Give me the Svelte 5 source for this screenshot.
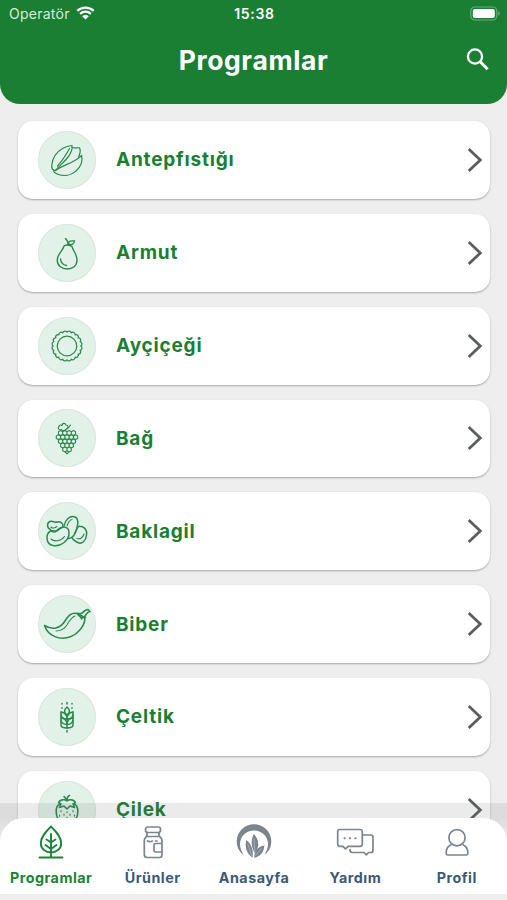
<script>
    // scalloped outline of the sunflower head
    function petals(cx, cy, r, count) {
        let d = '';
        for (let i = 0; i <= count; i++) {
            const a = (i / count) * Math.PI * 2 - Math.PI / 2;
            const x = (cx + r * Math.cos(a)).toFixed(2);
            const y = (cy + r * Math.sin(a)).toFixed(2);
            d += i === 0 ? `M${x} ${y}` : `A2.3 2.3 0 0 1 ${x} ${y}`;
        }
        return d;
    }

    function berry(x, y) {
        return `M${x} ${y - 2.4}l2.1 1.2v2.4l-2.1 1.2l-2.1 -1.2v-2.4z`;
    }

    function bunch() {
        const rows = [[24, 4], [28.2, 5], [32.4, 4], [36.5, 3], [40.5, 2]];
        return rows.map(([y, n]) => {
            let d = '';
            for (let i = 0; i < n; i++) {
                d += berry(29 + (i - (n - 1) / 2) * 4.3, y);
            }
            return d;
        }).join('') + 'M26.9 42.7l2.1 2.2l2.1 -2.2';
    }

    const programs = [
        {
            name: 'Antepfıstığı',
            width: 1.2,
            icon: [
                'M17.5 39.500C14.500 39.500 13.500 37.500 13.800 34C14.500 27 18.500 21 24.500 17.500C28 15.500 31 14.800 34 14.500C34.800 20 32 24 28.500 28C24.500 32.500 21 35.500 17.5 39.500Z',
                'M34 16.500C36.500 17.600 39 16.400 41.500 16.800C42.800 19.500 42 23 40.500 26.200',
                'M31.500 17.500C28.500 23 25 29 19.500 35',
                'M17.5 39.500C24 34 37 32 43.600 24.300C44.800 30 42.500 36 38 40C33 44.500 26 45.500 20.500 43.500C17.500 42.500 15.500 41 15.500 39'
            ]
        },
        {
            name: 'Armut',
            width: 1.4,
            icon: [
                'M26 22C28 20.5 32 20.5 34 22.5C35 27 39 30 39 36C39 42 34.5 45 29.2 45C23.5 45 19.2 41.5 19.2 36C19.2 30 25 27 26 22Z',
                'M30.3 21.5C30.5 18 29 16 27.5 14.5',
                'M30.5 20C30 17 33 16.5 36.5 17C36 20 33.5 21.5 30.5 20',
                'M22.5 35C23 39 25 41 28.5 41.5'
            ]
        },
        {
            name: 'Ayçiçeği',
            width: 1.25,
            icon: [
                petals(29, 29, 13.800, 20),
                'M19.2 29a9.8 9.8 0 1 0 19.6 0a9.8 9.8 0 1 0 -19.6 0'
            ]
        },
        {
            name: 'Bağ',
            width: 1.1,
            icon: [
                bunch(),
                'M28 21C26 22 24.5 22 23.5 20.5C20.5 21.5 19.5 19 21 17.5C21.5 15.5 23.5 16 24 16.5C24 13.5 27.5 14 28 16C30.5 16 30.5 19 29 20',
                'M27 21C29 20 31 19 32.500 16'
            ]
        },
        {
            name: 'Baklagil',
            width: 1.5,
            icon: [
                'M12 27C9 26 8.500 21 12 19.500C15 18.500 16.500 21 19 20C22 19 25.500 21 25 25C21 26 19 28 17 30C14 30 12.500 29 12 27Z',
                'M12.500 29C7.500 32 7.500 42 15 43.500C22 45 31.500 39 31 30.500C31 25 25 23.500 21.500 27C18 31 16 28 12.500 29Z',
                'M26 24C27 18 32 13 37 15C41.500 17 40 25 37 31C35.500 35 33.500 36.500 30 36.500',
                'M37 31C39 29 38 24 42 24.300C47 24.500 49.500 29 48.500 33C48 39 43.500 42.500 40 40.500C37 39 35 39 34 35.500'
            ],
            fine: ['M13 37C16 40 23 39.500 26.500 34.500M29 24C30 21 31.500 18 34 17.500M39 36.500C42 37.500 45 35.500 46 32M13 25C14.500 26.500 17 26 19 24.500']
        },
        {
            name: 'Biber',
            width: 1.6,
            icon: [
                'M6.500 30.500C14 35 22 34 27 26C30 21 33 17 39.500 18.500L46.500 22.500C48 29 41 38 33 41.500C22 46 10 41 6.500 30.500Z',
                'M39.500 18.500C40 22 43 20 43.500 24C44.500 21.500 46.500 22 47.500 22.500',
                'M43 18.500C46 18 45 15 50 14.500L52 16.500C48.500 17 49 19 46.500 21.500M39.500 18.500L43 18.500'
            ],
            fine: ['M18 36C23 36 27 33 29 30C31.500 25.500 33 22.500 37 21']
        },
        {
            name: 'Çeltik',
            width: 1.5,
            icon: [
                'M29 19C25.500 22 26 25 29 27C32 25 32.500 22 29 19ZM29 27V40',
                'M23 24V37C23 39.500 25 40 29 40C33 40 35 39.500 35 37V24',
                'M23 24C27 24.500 29 27 29 31C25 31 23 29 23 26.500M35 24C31 24.500 29 27 29 31C33 31 35 29 35 26.500',
                'M23 30C27 30.500 29 33 29 36.500C25 36.500 23 34 23 32M35 30C31 30.500 29 33 29 36.500C33 36.500 35 34 35 32',
                'M29 14.500V16M29 42.500V44M24 15.500V16M34 15.500V16M24 19.700V20.200M34 19.700V20.200'
            ]
        },
        {
            name: 'Çilek',
            width: 1.6,
            icon: [
                'M22 23C17 25 17.500 33 20 38C22 43 26 46 29 46C32 46 36 43 38 38C40.500 33 41 25 36 23',
                'M29 20C26 17.500 22 19 20.500 21.500L23 23L21.500 26.500L26 25L29 28L32 25L36.500 26.500L35 23L37.500 21.500C36 19 32 17.500 29 20ZM29 19.500C29 17 30 15 31.500 14.500M28.500 18.500L26 15.500'
            ],
            fine: ['M23 29.500v1.200M29 30.500v1.200M35 29.500v1.200M26 33v1.200M32 33v1.200M21.500 34v1.200M36.500 34v1.200M29 36v1.200']
        }
    ];

    const tabs = [
        { id: 'programs', label: 'Programlar' },
        { id: 'products', label: 'Ürünler' },
        { id: 'home', label: 'Anasayfa' },
        { id: 'help', label: 'Yardım' },
        { id: 'profile', label: 'Profil' }
    ];

    let active = 'programs';
</script>

<div class="screen">
    <header>
        <div class="status">
            <div class="carrier">
                <span>Operatör</span>
                <svg width="19" height="14" viewBox="0 0 19 14">
                    <path d="M1.300 4.800C5.800 0.500 13.200 0.500 17.700 4.800M4.100 7.800C7.200 4.900 11.800 4.900 14.900 7.800" fill="none" stroke="#fff" stroke-width="2.300" />
                    <path d="M9.500 13.600L6.200 10.300C8.100 8.700 10.900 8.700 12.800 10.300Z" fill="#fff" />
                </svg>
            </div>
            <div class="time">15:38</div>
            <div class="battery">
                <svg width="31" height="15" viewBox="0 0 31 15">
                    <rect x="0.800" y="1" width="26" height="13" rx="4" fill="none" stroke="#6aab76" stroke-width="1.200" />
                    <rect x="2.800" y="3" width="22" height="9" rx="2" fill="#fff" />
                    <path d="M28.300 5.300C30.300 6 30.300 9 28.300 9.700Z" fill="#6aab76" />
                </svg>
            </div>
        </div>
        <div class="title">
            <h1>Programlar</h1>
            <button aria-label="Ara">
                <svg width="24" height="24" viewBox="0 0 24 24" fill="none" stroke="#fff">
                    <circle cx="9" cy="8.500" r="7.100" stroke-width="2.300" />
                    <path d="M14 13.500L21.700 21.200" stroke-width="2.900" />
                </svg>
            </button>
        </div>
    </header>

    <main>
        {#each programs as program}
            <div class="card">
                <div class="circle">
                    <svg width="58" height="58" viewBox="0 0 58 58" stroke-width={program.width}>
                        {#each program.icon as d}
                            <path {d} />
                        {/each}
                        {#each program.fine || [] as d}
                            <path {d} stroke-width="1.1" />
                        {/each}
                    </svg>
                </div>
                <span class="name">{program.name}</span>
                <svg class="arrow" width="16" height="26" viewBox="0 0 16 26">
                    <path d="M1.700 1.900L13.300 13L1.700 24.100" />
                </svg>
            </div>
        {/each}
    </main>

    <footer>
        <nav>
            {#each tabs as tab}
                <button class="tab" class:active={tab.id === active} on:click={() => active = tab.id}>
                    <svg width="40" height="40" viewBox="0 0 40 40">
                        {#if tab.id === 'programs'}
                            <path d="M20 4.500C15.500 9 9.800 14.500 9.800 21.500C9.800 27 15 30.500 20 30.500C25 30.500 30.200 27 30.200 21.500C30.200 14.500 24.500 9 20 4.500ZM20 12V35M20 20.500L15.500 17.500M20 20.500L24.500 17.500M20 27L14.500 23M20 27L25.500 23M8.500 35.500H31.500" stroke-width="1.900" />
                        {:else if tab.id === 'products'}
                            <rect x="12.500" y="5" width="15" height="5.500" rx="2.300" />
                            <path d="M14 10.500V13C14 15 11.300 15.500 11.300 18.500V32.500C11.300 34.500 12.300 35.500 14.300 35.500H26.500C28.500 35.500 29 34.500 29 32.500V18.500C29 15.500 26 15 26 13V10.500M14 14.500H26M14.500 19C16 20 18 19.500 19.500 19M22.500 19H24M29 21.500H22.500C21.500 21.500 21 22 21 23V28.500C21 29.500 21.500 30 22.500 30H29" />
                        {:else if tab.id === 'home'}
                            <g class="solid">
                                <path d="M9.500 32.500C1 27 0.500 14 8 7C14.500 0.500 25.500 0.500 32 7C39.500 14 39 27 30.500 32.500C35.500 25 35 17.500 30 12.500C24.500 7.300 15.500 7.300 10 12.500C5 17.500 4.500 25 9.500 32.500Z" />
                                <path d="M19.800 12C16.800 17.500 17 25 20.800 31C26 25.500 25 17 19.800 12Z" />
                                <path d="M12.300 18C10.500 25 12.500 31.500 18.500 35.800C19.800 28.500 17.500 22 12.300 18Z" />
                                <path d="M30.500 23.500C24 24.500 20.500 28.500 20 35.800C26.500 34.500 29.500 30.500 30.500 23.500Z" />
                            </g>
                            <path d="M20 17L20.800 29M14 23L18 34M27.500 26.500L20.500 34.500" class="vein" />
                        {:else if tab.id === 'help'}
                            <path d="M4.500 7.500H25C26.500 7.500 27.300 8.300 27.300 9.500V22C27.300 23.500 26.500 24.300 25 24.300H13L10.500 27L8 24.300H5C3.500 24.300 2.700 23.500 2.700 22V9.500C2.700 8.300 3.500 7.500 4.500 7.500ZM27.500 13H36C37.300 13 38 13.800 38 15V28.500C38 29.800 37.300 30.500 36 30.500H33.500L31.300 32.800L29 30.500H17C15.500 30.500 15 29.500 15 27.500" />
                            <path d="M9.500 16.200H9.800M14.900 16.200H15.200M20.300 16.200H20.600" stroke-width="2" />
                        {:else}
                            <circle cx="20" cy="15.700" r="8.100" />
                            <path d="M14 22.700C11 24 9.200 27 9.200 30.500V31.500C9.200 32.500 9.700 33 10.700 33H29.300C30.300 33 30.800 32.500 30.800 31.500V30.500C30.800 27 29 24 26 22.700" />
                        {/if}
                    </svg>
                    <span>{tab.label}</span>
                </button>
            {/each}
        </nav>
    </footer>
</div>

<style>
    :global(body) {
        margin: 0;
    }
    .screen {
        position: relative;
        display: flex;
        flex-direction: column;
        height: 900px;
        overflow: hidden;
        background-color: #eeeeee;
        font-family: Inter, "Liberation Sans", sans-serif;
    }
    button {
        border: 0;
        padding: 0;
        background: none;
        font-family: inherit;
    }
    header {
        flex: none;
        height: 103.500px;
        border-radius: 0 0 20px 20px;
        background-color: #1a7f33;
        color: #fff;
    }
    .status {
        display: grid;
        grid-template-columns: 1fr auto 1fr;
        align-items: center;
        height: 27px;
        padding: 0 6px 0 9px;
        font-size: 14px;
    }
    .carrier {
        display: flex;
        align-items: center;
        gap: 6px;
        letter-spacing: 0.25px;
        color: #d9edda;
    }
    .carrier svg {
        margin-top: -2px;
    }
    .time {
        margin-right: 1px;
        font-weight: 600;
        letter-spacing: 0.7px;
    }
    .battery {
        display: flex;
        justify-content: flex-end;
    }
    .title {
        display: grid;
        grid-template-columns: 1fr auto 1fr;
        align-items: center;
        height: 66px;
        padding: 0 17px;
    }
    h1 {
        grid-column: 2;
        margin: 0;
        font-size: 26.500px;
        font-weight: 700;
        letter-spacing: 0.6px;
    }
    .title button {
        justify-self: end;
        height: 24px;
    }
    main {
        display: flex;
        flex-direction: column;
        gap: 15px;
        padding: 17.500px 17px 0 18px;
    }
    .card {
        box-sizing: border-box;
        flex: none;
        display: flex;
        align-items: center;
        height: 77.850px;
        padding: 0 7px 0 20px;
        border-radius: 15px;
        background-color: #fff;
        box-shadow: 0 1px 2px rgba(0, 0, 0, .3);
    }
    .circle {
        width: 58px;
        height: 58px;
        border-radius: 50%;
        background-color: #e2f2e8;
        box-shadow: inset 0 0 0 1px #dce5df;
    }
    .circle svg {
        display: block;
        fill: none;
        stroke: #2b8950;
        stroke-linecap: round;
        stroke-linejoin: round;
    }
    .name {
        margin-left: 20px;
        font-size: 19px;
        font-weight: 700;
        letter-spacing: 0.8px;
        color: #1a7f33;
    }
    .arrow {
        margin-left: auto;
        fill: none;
        stroke: #5b5e61;
        stroke-width: 2.800;
    }
    footer {
        position: absolute;
        left: 0;
        right: 0;
        bottom: 0;
        padding: 15px 0 6px;
        background: linear-gradient(rgba(90, 90, 90, .12) 15px, #eeeeee 40px);
    }
    nav {
        display: flex;
        height: 76px;
        border-radius: 24px 24px 0 0;
        background-color: #fff;
    }
    .tab {
        flex: 1;
        display: flex;
        flex-direction: column;
        align-items: center;
        padding: 4px 0 0 1px;
        font-size: 14.300px;
        font-weight: 700;
        letter-spacing: 0.5px;
        color: #3b5a78;
    }
    .tab svg {
        flex: none;
        fill: none;
        stroke: #7c8490;
        stroke-width: 1.700;
        stroke-linecap: round;
        stroke-linejoin: round;
    }
    .tab span {
        margin-top: 7px;
    }
    .tab .solid {
        fill: #7c8490;
        stroke: none;
    }
    .tab .vein {
        stroke: #c3c8ce;
        stroke-width: 0.600;
    }
    .active {
        color: #1a8436;
    }
    .active svg {
        stroke: #1a8436;
    }
</style>
